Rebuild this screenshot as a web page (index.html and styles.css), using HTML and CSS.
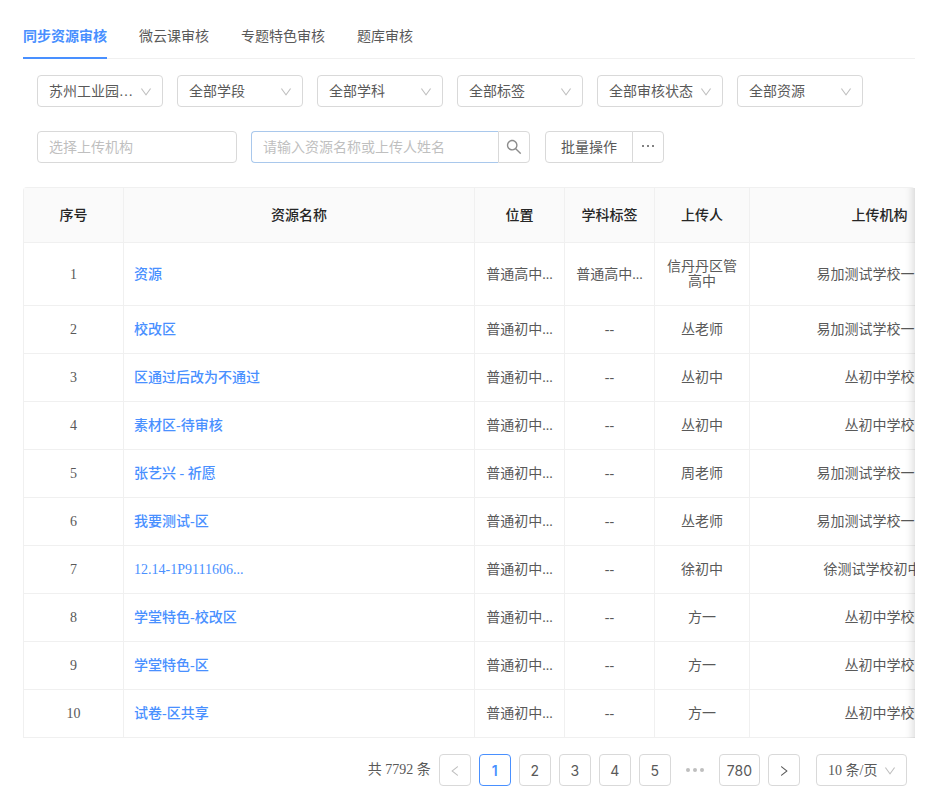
FILE: index.html
```
<!DOCTYPE html>
<html lang="zh-CN">
<head>
  <meta charset="UTF-8" />
  <meta name="viewport" content="width=device-width, initial-scale=1.0" />
  <title>资源审核</title>
  <link rel="stylesheet" href="styles.css">
</head>
<body>
  <svg class="sprite" aria-hidden="true">
    <symbol id="icon-down" viewBox="64 64 896 896"><path d="M884 256h-75c-5.1 0-9.9 2.5-12.9 6.6L512 654.2 227.9 262.6c-3-4.1-7.8-6.6-12.9-6.6h-75c-6.5 0-10.3 7.4-6.5 12.7l352.6 486.1c12.8 17.6 39 17.6 51.7 0l352.6-486.1c3.9-5.3.1-12.7-6.4-12.7z"/></symbol>
    <symbol id="icon-left" viewBox="64 64 896 896"><path d="M724 218.3V141c0-6.7-7.7-10.4-12.9-6.3L260.3 486.8a31.86 31.86 0 000 50.3l450.8 352.1c5.3 4.1 12.9.4 12.9-6.3v-77.3c0-4.9-2.3-9.6-6.1-12.6l-360-281 360-281.1c3.8-3 6.1-7.7 6.1-12.6z"/></symbol>
    <symbol id="icon-right" viewBox="64 64 896 896"><path d="M765.7 486.8L314.9 134.7A7.97 7.97 0 00302 141v77.3c0 4.9 2.3 9.6 6.1 12.6l360 281.1-360 281.1c-3.9 3-6.1 7.7-6.1 12.6V883c0 6.7 7.7 10.4 12.9 6.3l450.8-352.1a31.96 31.96 0 000-50.4z"/></symbol>
    <symbol id="icon-search" viewBox="64 64 896 896"><path d="M909.6 854.5L649.9 594.8C690.2 542.7 712 479 712 412c0-80.2-31.3-155.4-87.9-212.1-56.6-56.7-132-87.9-212.1-87.9s-155.5 31.3-212.1 87.9C143.2 256.5 112 331.8 112 412c0 80.1 31.3 155.5 87.9 212.1C256.5 680.8 331.8 712 412 712c67 0 130.6-21.8 182.7-62l259.7 259.6a8.2 8.2 0 0011.6 0l43.6-43.5a8.2 8.2 0 000-11.6zM570.4 570.4C528 612.7 471.8 636 412 636s-116-23.3-158.4-65.6C211.3 528 188 471.8 188 412s23.3-116.1 65.6-158.4C296 211.3 352.2 188 412 188s116.1 23.2 158.4 65.6S636 352.2 636 412s-23.3 116.1-65.6 158.4z"/></symbol>
  </svg>

  <nav class="tabs">
    <a href="#sync" class="tab active">同步资源审核</a>
    <a href="#cloud" class="tab">微云课审核</a>
    <a href="#topic" class="tab">专题特色审核</a>
    <a href="#bank" class="tab">题库审核</a>
  </nav>

  <form class="filters">
    <div class="filter-row">
      <div class="select">
        <select aria-label="区域"><option>苏州工业园…</option></select>
        <svg class="arrow"><use href="#icon-down"/></svg>
      </div>
      <div class="select">
        <select aria-label="学段"><option>全部学段</option></select>
        <svg class="arrow"><use href="#icon-down"/></svg>
      </div>
      <div class="select">
        <select aria-label="学科"><option>全部学科</option></select>
        <svg class="arrow"><use href="#icon-down"/></svg>
      </div>
      <div class="select">
        <select aria-label="标签"><option>全部标签</option></select>
        <svg class="arrow"><use href="#icon-down"/></svg>
      </div>
      <div class="select">
        <select aria-label="审核状态"><option>全部审核状态</option></select>
        <svg class="arrow"><use href="#icon-down"/></svg>
      </div>
      <div class="select">
        <select aria-label="资源"><option>全部资源</option></select>
        <svg class="arrow"><use href="#icon-down"/></svg>
      </div>
    </div>
    <div class="filter-row">
      <input type="text" class="org-input" placeholder="选择上传机构" aria-label="上传机构">
      <div class="search">
        <input type="text" class="search-input" placeholder="请输入资源名称或上传人姓名" aria-label="搜索">
        <button type="button" class="search-btn" aria-label="搜索"><svg><use href="#icon-search"/></svg></button>
      </div>
      <div class="btn-group">
        <button type="button" class="batch-btn">批量操作</button>
        <button type="button" class="more-btn" aria-label="更多">
          <svg viewBox="0 0 14 14"><circle cx="2" cy="6" r="1"/><circle cx="7" cy="6" r="1"/><circle cx="12" cy="6" r="1"/></svg>
        </button>
      </div>
    </div>
  </form>

  <div class="table-wrap">
    <div class="table-scroll">
      <table>
        <colgroup>
          <col class="col-index">
          <col class="col-name">
          <col class="col-place">
          <col class="col-tag">
          <col class="col-user">
          <col class="col-org">
        </colgroup>
        <thead>
          <tr><th>序号</th><th>资源名称</th><th>位置</th><th>学科标签</th><th>上传人</th><th>上传机构</th></tr>
        </thead>
        <tbody>
          <tr><td>1</td><td class="name"><a href="#1">资源</a></td><td>普通高中...</td><td>普通高中...</td><td>信丹丹区管高中</td><td>易加测试学校一贯制</td></tr>
          <tr><td>2</td><td class="name"><a href="#2">校改区</a></td><td>普通初中...</td><td>--</td><td>丛老师</td><td>易加测试学校一贯制</td></tr>
          <tr><td>3</td><td class="name"><a href="#3">区通过后改为不通过</a></td><td>普通初中...</td><td>--</td><td>丛初中</td><td>丛初中学校</td></tr>
          <tr><td>4</td><td class="name"><a href="#4">素材区-待审核</a></td><td>普通初中...</td><td>--</td><td>丛初中</td><td>丛初中学校</td></tr>
          <tr><td>5</td><td class="name"><a href="#5">张艺兴 - 祈愿</a></td><td>普通初中...</td><td>--</td><td>周老师</td><td>易加测试学校一贯制</td></tr>
          <tr><td>6</td><td class="name"><a href="#6">我要测试-区</a></td><td>普通初中...</td><td>--</td><td>丛老师</td><td>易加测试学校一贯制</td></tr>
          <tr><td>7</td><td class="name"><a href="#7">12.14-1P9111606...</a></td><td>普通初中...</td><td>--</td><td>徐初中</td><td>徐测试学校初中部</td></tr>
          <tr><td>8</td><td class="name"><a href="#8">学堂特色-校改区</a></td><td>普通初中...</td><td>--</td><td>方一</td><td>丛初中学校</td></tr>
          <tr><td>9</td><td class="name"><a href="#9">学堂特色-区</a></td><td>普通初中...</td><td>--</td><td>方一</td><td>丛初中学校</td></tr>
          <tr><td>10</td><td class="name"><a href="#10">试卷-区共享</a></td><td>普通初中...</td><td>--</td><td>方一</td><td>丛初中学校</td></tr>
        </tbody>
      </table>
    </div>
  </div>

  <div class="pagination">
    <span class="total">共 7792 条</span>
    <button type="button" class="page" disabled aria-label="上一页"><svg><use href="#icon-left"/></svg></button>
    <button type="button" class="page current">1</button>
    <button type="button" class="page">2</button>
    <button type="button" class="page">3</button>
    <button type="button" class="page">4</button>
    <button type="button" class="page">5</button>
    <span class="jump"><svg viewBox="0 0 20 6"><circle cx="3" cy="3" r="2"/><circle cx="10" cy="3" r="2"/><circle cx="17" cy="3" r="2"/></svg></span>
    <button type="button" class="page">780</button>
    <button type="button" class="page" aria-label="下一页"><svg><use href="#icon-right"/></svg></button>
    <div class="select page-size">
      <select aria-label="每页条数"><option>10 条/页</option></select>
      <svg class="arrow"><use href="#icon-down"/></svg>
    </div>
  </div>
</body>
</html>
```
FILE: styles.css
```
* {
  box-sizing: border-box;
}
body {
  margin: 0;
  padding: 13px 19px 16px 23px;
  font-family: 'Liberation Serif', 'Noto Sans CJK SC', sans-serif;
  font-size: 14px;
  line-height: 22px;
  color: #595959;
  background: #fff;
}
a {
  color: #4990ff;
  text-decoration: none;
}
button, input, select {
  height: 32px;
  margin: 0;
  font: inherit;
  color: inherit;
  background: #fff;
  border: 1px solid #d9d9d9;
  border-radius: 4px;
  outline: none;
}
button {
  cursor: pointer;
}
svg {
  display: block;
  fill: currentColor;
}
.sprite {
  display: none;
}
.tabs {
  display: flex;
  gap: 32px;
  height: 46px;
  border-bottom: 1px solid #f0f0f0;
}
.tab {
  height: 46px;
  padding: 13px 0 0;
  color: #595959;
}
.tab.active {
  color: #4990ff;
  font-weight: bold;
  border-bottom: 2px solid #4990ff;
}
.filters {
  padding: 16px 14px 24px;
}
.filter-row {
  display: flex;
  flex-wrap: wrap;
  gap: 14px;
}
.filter-row + .filter-row {
  margin-top: 24px;
}
.select {
  position: relative;
  width: 126px;
}
.select select {
  display: block;
  width: 100%;
  padding: 2px 11px 0;
  appearance: none;
}
.arrow {
  position: absolute;
  top: 11px;
  right: 11px;
  width: 12px;
  height: 12px;
  color: #bfbfbf;
  pointer-events: none;
}
.org-input {
  width: 200px;
  padding: 2px 11px 0;
}
input::placeholder {
  color: #bfbfbf;
}
.search, .btn-group {
  display: flex;
}
.search {
  margin-right: 1px;
}
.search-input {
  width: 247px;
  padding: 2px 11px 0;
  border-color: #a9c8ec;
  border-right: none;
  border-radius: 4px 0 0 4px;
}
.search-btn {
  width: 32px;
  padding: 0 7px;
  border-radius: 0 4px 4px 0;
  color: #8c8c8c;
}
.search-btn svg {
  width: 16px;
  height: 16px;
}
.batch-btn {
  padding: 2px 15px 0;
  border-radius: 4px 0 0 4px;
}
.more-btn {
  width: 32px;
  margin-left: -1px;
  padding: 0 8px;
  border-radius: 0 4px 4px 0;
}
.more-btn svg {
  width: 14px;
  height: 14px;
}
.table-wrap {
  position: relative;
  border: 1px solid #f0f0f0;
  border-width: 1px 0 0 1px;
  border-radius: 4px 4px 0 0;
}
.table-wrap::after {
  content: '';
  position: absolute;
  inset: 0 0 0 auto;
  width: 30px;
  box-shadow: inset -10px 0 8px -8px rgba(0, 0, 0, 0.15);
  pointer-events: none;
}
.table-scroll {
  overflow-x: auto;
  scrollbar-width: none;
}
table {
  width: 986px;
  table-layout: fixed;
  border-collapse: separate;
  border-spacing: 0;
}
.col-index { width: 100px; }
.col-name { width: 351px; }
.col-place, .col-tag { width: 90px; }
.col-user { width: 95px; }
.col-org { width: 260px; }
th, td {
  padding: 16px 10px;
  text-align: center;
  border: 1px solid #f0f0f0;
  border-width: 0 1px 1px 0;
}
th {
  padding: 17px 10px 15px;
  color: #262626;
  font-weight: 500;
  background: #fafafa;
}
td {
  line-height: 15px;
}
td.name {
  text-align: left;
  font-weight: 500;
}
.pagination {
  display: flex;
  flex-wrap: wrap;
  justify-content: flex-end;
  gap: 8px;
  padding: 16px 8px 0 0;
}
.total {
  line-height: 32px;
}
.page {
  display: flex;
  align-items: center;
  justify-content: center;
  min-width: 32px;
  padding: 2px 7px 0;
  font-family: Inter, sans-serif;
}
.page svg {
  width: 12px;
  height: 12px;
}
.page.current {
  color: #4990ff;
  font-weight: 600;
  border-color: #4990ff;
}
.page:disabled {
  color: #bfbfbf;
  cursor: not-allowed;
}
.jump {
  display: flex;
  align-items: center;
  justify-content: center;
  width: 32px;
  color: #bfbfbf;
}
.jump svg {
  width: 20px;
  height: 6px;
}
.page-size {
  width: 91px;
  margin-left: 8px;
}
```
